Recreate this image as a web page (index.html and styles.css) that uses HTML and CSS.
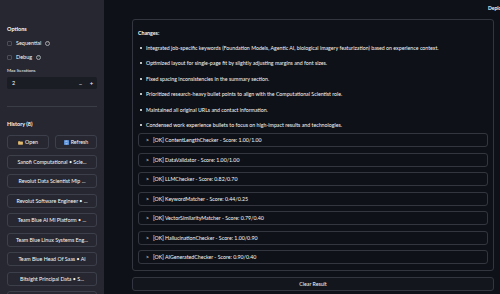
FILE: index.html
```html
<!DOCTYPE html>
<html lang="en">
<head>
	<meta http-equiv="Content-Type" content="text/html;charset=UTF-8">
	<link rel="stylesheet" href="styles.css">
</head>
<body>

<div class="app">
	<aside class="sidebar">
		<div class="sidebar__title">Options</div>
		<label class="check">
			<span class="check__box"></span>
			<span class="check__label">Sequential</span>
			<span class="help">?</span>
		</label>
		<label class="check">
			<span class="check__box"></span>
			<span class="check__label">Debug</span>
			<span class="help">?</span>
		</label>
		<div class="field__label">Max Iterations</div>
		<div class="number">
			<span class="number__value">2</span>
			<span class="number__btn">&minus;</span>
			<span class="number__btn">+</span>
		</div>
		<hr class="divider">
		<div class="sidebar__title sidebar__title_history">History (8)</div>
		<div class="actions">
			<button class="btn">
				<svg class="btn__icon" viewBox="0 0 10 10" width="5" height="5"><path d="M0.5 2h3l1 1h5v6h-9z" fill="#c9a25a"/><path d="M0.5 4h9v5h-9z" fill="#e0bb70"/></svg>
				Open
			</button>
			<button class="btn">
				<svg class="btn__icon" viewBox="0 0 10 10" width="5" height="5"><rect x="0" y="0" width="10" height="10" rx="1.5" fill="#5b8fd6"/><path d="M3 4a2.2 2.2 0 0 1 4 -0.6M7 6a2.2 2.2 0 0 1 -4 0.6" stroke="#fff" stroke-width="1" fill="none"/></svg>
				Refresh
			</button>
		</div>
		<ul class="history">
			<li class="btn history__item">Sanofi Computational • Scie...</li>
			<li class="btn history__item">Revolut Data Scientist Mip ...</li>
			<li class="btn history__item">Revolut Software Engineer • ...</li>
			<li class="btn history__item">Team Blue AI Ml Platform • ...</li>
			<li class="btn history__item">Team Blue Linux Systems Eng...</li>
			<li class="btn history__item">Team Blue Head Of Saas • Ai</li>
			<li class="btn history__item">Bitsight Principal Data • S...</li>
			<li class="btn history__item">Bitsight Senior Data</li>
		</ul>
	</aside>

	<main class="main">
		<div class="toolbar">Deploy</div>

		<section class="result">
			<div class="result__title">Changes:</div>
			<ul class="changes">
				<li>Integrated job-specific keywords (Foundation Models, Agentic AI, biological imagery featurization) based on experience context.</li>
				<li>Optimized layout for single-page fit by slightly adjusting margins and font sizes.</li>
				<li>Fixed spacing inconsistencies in the summary section.</li>
				<li>Prioritized research-heavy bullet points to align with the Computational Scientist role.</li>
				<li>Maintained all original URLs and contact information.</li>
				<li>Condensed work experience bullets to focus on high-impact results and technologies.</li>
			</ul>

			<div class="checks">
				<div class="expander"><span class="expander__arrow">&gt;</span>[OK] ContentLengthChecker - Score: 1.00/1.00</div>
				<div class="expander"><span class="expander__arrow">&gt;</span>[OK] DataValidator - Score: 1.00/1.00</div>
				<div class="expander"><span class="expander__arrow">&gt;</span>[OK] LLMChecker - Score: 0.82/0.70</div>
				<div class="expander"><span class="expander__arrow">&gt;</span>[OK] KeywordMatcher - Score: 0.44/0.25</div>
				<div class="expander"><span class="expander__arrow">&gt;</span>[OK] VectorSimilarityMatcher - Score: 0.79/0.40</div>
				<div class="expander"><span class="expander__arrow">&gt;</span>[OK] HallucinationChecker - Score: 1.00/0.90</div>
				<div class="expander"><span class="expander__arrow">&gt;</span>[OK] AIGeneratedChecker - Score: 0.90/0.40</div>
			</div>
		</section>

		<button class="clear">Clear Result</button>
	</main>
</div>

</body>
</html>
```

FILE: styles.css
```css
body {
	margin: 0;
	padding: 0;
	background: #0e1117;
	color: #fafafa;
	font-family: Lato, "Noto Sans", sans-serif;
	font-size: 5.25px;
	overflow: hidden;
}

.app {
	display: flex;
	height: 294px;
}

/* sidebar */

.sidebar {
	width: 104px;
	flex-shrink: 0;
	box-sizing: border-box;
	padding: 26px 7px 0 7px;
	background: #262730;
	overflow: hidden;
}

.sidebar__title {
	font-weight: bold;
	font-size: 5.5px;
	line-height: 7px;
	margin-bottom: 7px;
}

.check {
	display: flex;
	align-items: center;
	gap: 4px;
	height: 6px;
	margin-bottom: 8px;
	font-size: 5.5px;
}

.check__box {
	width: 5px;
	height: 5px;
	box-sizing: border-box;
	border: 1px solid #4b4e58;
	border-radius: 1px;
}

.help {
	display: inline-flex;
	align-items: center;
	justify-content: center;
	box-sizing: border-box;
	width: 5px;
	height: 5px;
	border: 0.6px solid #a3a6ad;
	border-radius: 50%;
	font-size: 3.5px;
	color: #a3a6ad;
}

.field__label {
	font-size: 4.5px;
	line-height: 6px;
	margin-top: 6px;
	margin-bottom: 3px;
}

.number {
	display: flex;
	align-items: center;
	height: 12px;
	background: #1b1d25;
	border-radius: 2px;
	padding-left: 5px;
	font-size: 5.5px;
}

.number__value {
	flex: 1;
}

.number__btn {
	width: 11px;
	text-align: center;
	font-size: 6px;
}

.divider {
	border: none;
	border-top: 1px solid #3b3d46;
	margin: 17px 0 0 0;
}

.sidebar__title_history {
	margin-top: 14px;
	margin-bottom: 7px;
}

.btn {
	display: flex;
	align-items: center;
	justify-content: center;
	gap: 2px;
	box-sizing: border-box;
	height: 14px;
	background: #262730;
	border: 1px solid #3d404a;
	border-radius: 3px;
	color: #fafafa;
	font-family: inherit;
	font-size: 5.3px;
	padding: 0;
	white-space: nowrap;
}

.actions {
	display: grid;
	grid-template-columns: 1fr 1fr;
	gap: 6px;
	margin-bottom: 5.5px;
}

.history {
	list-style: none;
	margin: 0;
	padding: 0;
	display: flex;
	flex-direction: column;
	gap: 5.5px;
}

.history__item {
	height: 14px;
}

/* main */

.main {
	position: relative;
	flex: 1;
	box-sizing: border-box;
	padding: 19px 6px 0 28px;
}

.toolbar {
	position: absolute;
	top: 5px;
	left: 384px;
	font-size: 5px;
	font-weight: bold;
	white-space: nowrap;
}

.result {
	box-sizing: border-box;
	height: 252px;
	border: 1px solid #33363e;
	border-radius: 3px;
	padding: 9px 5px 0 5px;
}

.result__title {
	font-weight: bold;
	line-height: 8px;
	margin-bottom: 7px;
}

.changes {
	margin: 0;
	padding: 0 0 0 8px;
	list-style: none;
}

.changes li {
	position: relative;
	line-height: 8px;
	margin-bottom: 7.4px;
}

.changes li::before {
	content: "";
	position: absolute;
	left: -6px;
	top: 3px;
	width: 2px;
	height: 2px;
	border-radius: 50%;
	background: #fafafa;
}

.checks {
	display: flex;
	flex-direction: column;
	gap: 5.5px;
	margin-top: -3px;
}

.expander {
	display: flex;
	align-items: center;
	box-sizing: border-box;
	height: 14px;
	border: 1px solid #33363e;
	border-radius: 3px;
	padding-left: 7px;
}

.expander__arrow {
	width: 7px;
	font-size: 5px;
}

.clear {
	display: block;
	width: 100%;
	height: 14px;
	margin-top: 6px;
	box-sizing: border-box;
	background: #13161d;
	border: 1px solid #33363e;
	border-radius: 3px;
	color: #fafafa;
	font-family: inherit;
	font-size: 5.25px;
}
```
